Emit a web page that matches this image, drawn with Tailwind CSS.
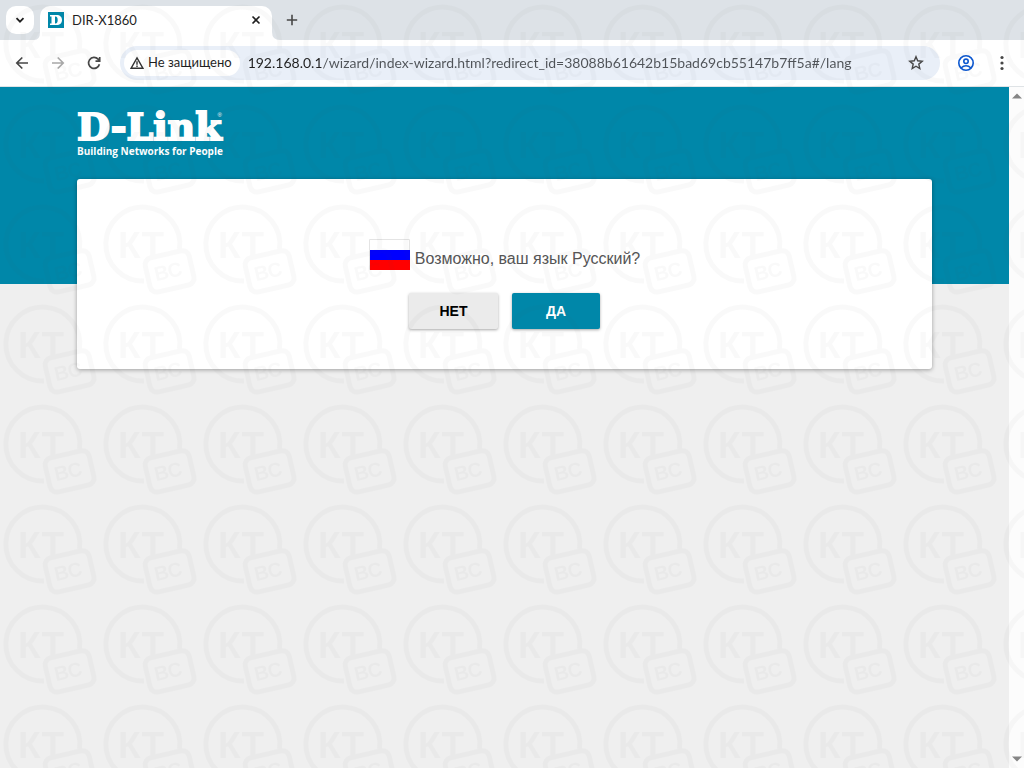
<!DOCTYPE html>
<html lang="ru">
<head>
  <meta charset="UTF-8">
  <meta name="viewport" content="width=device-width, initial-scale=1.0">
  <title>DIR-X1860</title>
  <script src="https://cdn.jsdelivr.net/npm/@tailwindcss/browser@4"></script>
</head>
<body class="relative flex flex-col h-screen overflow-hidden bg-white font-['Lato','Noto_Sans',sans-serif] text-[#1f1f1f]">

  <!-- Tabs -->
  <header class="flex items-end h-10 shrink-0 bg-[#dde2e7] pl-1.5">
    <button type="button" aria-label="Поиск вкладок" class="grid place-items-center w-7 h-7 mb-1.5 rounded-[10px] bg-white">
      <svg class="w-3 h-3" viewBox="0 0 12 12" fill="none" stroke="#1f1f1f" stroke-width="1.8"><path d="M2.5 4.2 6 7.7l3.5-3.5"/></svg>
    </button>
    <svg class="w-1.5 h-2" viewBox="0 0 6 8" fill="#fff"><path d="M6 0v8H0q6 0 6-8z"/></svg>
    <div class="flex items-center w-[232px] h-[34px] rounded-t-[10px] bg-white pl-2 pr-2 pb-1.5">
      <svg class="w-4 h-4 mr-2 shrink-0" viewBox="0 0 16 16"><path fill="#0087a9" d="M0 0h16v16H0z"/><path fill="#fff" fill-rule="evenodd" d="M2 3h6.500C12 3 14 5 14 8s-2 5-5.500 5H2v-1.500h1.500v-7H2zm5 1.500v7h.5c1.500 0 2.200-1.300 2.200-3.500S9 4.500 7.500 4.500z"/></svg>
      <span class="flex-1 text-[13px] leading-5">DIR-X1860</span>
      <button type="button" aria-label="Закрыть вкладку" class="grid place-items-center w-4 h-4">
        <svg class="w-2.5 h-2.5" viewBox="0 0 10 10" stroke="#1f1f1f" stroke-width="1.6"><path d="m1.500 1.500 7 7m0-7-7 7"/></svg>
      </button>
    </div>
    <svg class="w-2 h-2" viewBox="0 0 8 8" fill="#fff"><path d="M0 0v8h8Q0 8 0 0z"/></svg>
    <button type="button" aria-label="Новая вкладка" class="grid place-items-center w-6 h-7 mb-1.5">
      <svg class="w-3 h-3" viewBox="0 0 12 12" stroke="#474747" stroke-width="1.600"><path d="M6 .8v10.400M.8 6h10.400"/></svg>
    </button>
  </header>

  <!-- Toolbar -->
  <nav class="flex items-center h-[46px] shrink-0 px-3.5">
    <button type="button" aria-label="Назад" class="mr-5">
      <svg class="w-4 h-4" viewBox="0 0 16 16" fill="none" stroke="#474747" stroke-width="1.7"><path d="M14 8H3m5.300-5.500L2.800 8l5.500 5.500"/></svg>
    </button>
    <button type="button" aria-label="Вперёд" class="mr-5">
      <svg class="w-4 h-4" viewBox="0 0 16 16" fill="none" stroke="#a8a8a8" stroke-width="1.700"><path d="M2 8h11M7.700 2.500 13.200 8l-5.500 5.500"/></svg>
    </button>
    <button type="button" aria-label="Обновить" class="mr-4.5">
      <svg class="w-4 h-4" viewBox="0 0 16 16" fill="none" stroke="#474747" stroke-width="1.700"><path d="M13.400 9.200a5.500 5.500 0 1 1-1.300-5l1.500 1.600M13.700 2v4.200H9.500"/></svg>
    </button>
    <div class="flex flex-1 items-center h-[34px] rounded-full bg-[#e9eff8] pl-1 pr-4">
      <button type="button" class="flex items-center h-[26px] shrink-0 rounded-full bg-white pl-1.5 pr-2 text-[13px]">
        <svg class="w-3.5 h-3.5 mr-1" viewBox="0 0 14 14" fill="none" stroke="#333" stroke-width="1.400" stroke-linejoin="miter"><path d="M7 1.900 13 12.300H1z"/><path d="M7 5.300v3.400M7 9.600V11"/></svg>
        Не защищено
      </button>
      <input type="text" aria-label="Адрес" value="192.168.0.1/wizard/index-wizard.html?redirect_id=38088b61642b15bad69cb55147b7ff5a#/lang" class="flex-1 min-w-0 ml-2 h-6 pb-0.5 text-sm outline-none text-transparent bg-clip-text bg-[linear-gradient(to_right,#1f1f1f_73px,#4f5358_73px)]">
      <button type="button" aria-label="Добавить в закладки">
        <svg class="w-4 h-4" viewBox="0 0 16 16" fill="none" stroke="#474747" stroke-width="1.400"><path d="m8 1.700 1.700 4.100 4.500.4-3.400 2.900 1 4.400L8 11.200l-3.800 2.300 1-4.400-3.400-2.900 4.500-.4z"/></svg>
      </button>
    </div>
    <button type="button" aria-label="Профиль" class="ml-4.5">
      <svg class="w-4 h-4" viewBox="0 0 16 16" fill="none" stroke="#0b57d0" stroke-width="1.600"><circle cx="8" cy="8" r="7.200"/><circle cx="8" cy="6.300" r="2.200"/><path d="M3 13q5-4.500 10 0"/></svg>
    </button>
    <button type="button" aria-label="Меню" class="ml-5">
      <svg class="w-4 h-4" viewBox="0 0 16 16" fill="#474747"><circle cx="8" cy="2.500" r="1.600"/><circle cx="8" cy="8" r="1.600"/><circle cx="8" cy="13.500" r="1.600"/></svg>
    </button>
  </nav>

  <!-- Page -->
  <div class="flex flex-1 min-h-0 border-t border-[#dfe3e6] font-['Liberation_Sans',Arial,sans-serif]">
    <main class="flex-1 bg-[linear-gradient(to_bottom,#0087a9_197px,#efefef_197px)] px-[77px] pt-6">
      <a href="#/" class="block w-fit text-white">
        <span class="flex items-start h-8">
          <span class="font-['DejaVu_Serif',serif] font-bold text-[38px] leading-8 [-webkit-text-stroke:2px_white]">D-Link</span>
          <sup class="top-0 -ml-1 text-[6px] leading-2">®</sup>
        </span>
        <span class="block font-['Liberation_Sans_Narrow','Open_Sans',sans-serif] font-bold text-[10px] leading-4">Building Networks for People</span>
      </a>
      <section class="flex flex-col items-center mt-5 pt-[60px] pb-10 rounded-[3px] bg-white shadow-[0_1px_4px_rgba(0,0,0,0.35)]">
        <div class="flex items-center mb-[23px]">
          <svg class="w-[41px] h-[31px] mr-[5px]" viewBox="0 0 41 31"><path fill="#fff" stroke="#e4e4e4" d="M.5.5h40v30H.5z"/><path fill="#00f" d="M1 11h40v10H1z"/><path fill="#f00" d="M1 21h40v10H1z"/></svg>
          <p class="pt-2 text-base leading-5 text-[#555]">Возможно, ваш язык Русский?</p>
        </div>
        <div class="flex gap-3.5 text-sm font-bold">
          <button type="button" class="w-[89px] h-9 rounded-xs bg-[#ebebeb] text-black shadow-[0_1px_3px_rgba(0,0,0,0.35)]">НЕТ</button>
          <button type="button" class="w-22 h-9 rounded-xs bg-[#0087a9] text-white shadow-[0_1px_3px_rgba(0,0,0,0.35)]">ДА</button>
        </div>
      </section>
    </main>

    <!-- Scrollbar -->
    <div class="flex flex-col justify-between items-center w-[15px] bg-[#fcfcfc] py-1.5">
      <svg class="w-2.5 h-1.5" viewBox="0 0 10 6" fill="#858585"><path d="M0 5.500 5 .5l5 5z"/></svg>
      <svg class="w-2.5 h-1.5" viewBox="0 0 10 6" fill="#858585"><path d="M0 .5l5 5 5-5z"/></svg>
    </div>
  </div>

  <!-- Watermark -->
  <svg class="absolute inset-0 w-full h-full pointer-events-none opacity-[0.03]" aria-hidden="true">
    <defs>
      <pattern id="mark" width="100" height="100" patternUnits="userSpaceOnUse">
        <path d="M44 81A37 37 0 1 1 79.500 49" fill="none" stroke="#555" stroke-width="5"/>
        <text x="18" y="58" fill="#555" font-family="Liberation Sans" font-weight="bold" font-size="37">КТ</text>
        <g transform="rotate(-13 69 71)">
          <rect x="47" y="54" width="45" height="35" rx="7" fill="none" stroke="#555" stroke-width="5"/>
          <text x="68" y="78" fill="#555" text-anchor="middle" font-family="Liberation Sans" font-weight="bold" font-size="20">ВС</text>
        </g>
      </pattern>
    </defs>
    <rect width="100%" height="100%" fill="url(#mark)"/>
  </svg>
</body>
</html>
